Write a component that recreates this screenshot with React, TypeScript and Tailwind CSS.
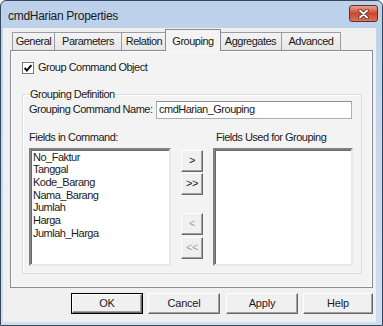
import React from 'react';

const fields = ['No_Faktur', 'Tanggal', 'Kode_Barang', 'Nama_Barang', 'Jumlah', 'Harga', 'Jumlah_Harga'];

const tabs = [
    { label: 'General', w: 'w-[43px]' },
    { label: 'Parameters', w: 'w-[68px]' },
    { label: 'Relation', w: 'w-[46px]' },
    { label: 'Grouping', w: 'w-[56px]', active: true },
    { label: 'Aggregates', w: 'w-[63px]' },
    { label: 'Advanced', w: 'w-[60px]' },
];

// classic raised 3D button
function Btn({ children, className = '', disabled = false }: { children: React.ReactNode; className?: string; disabled?: boolean }) {
    return (
        <div
            className={`flex items-center justify-center bg-[#f0f0f0] border border-t-white border-l-white border-r-[#696969] border-b-[#696969] shadow-[inset_-1px_-1px_0_#a0a0a0] ${disabled ? 'text-[#a0a0a0]' : 'text-[#1a1a1a]'} ${className}`}
        >
            {children}
        </div>
    );
}

function ListBox({ className = '', children }: { className?: string; children?: React.ReactNode }) {
    return (
        <div className={`bg-white border-2 border-t-[#808080] border-l-[#808080] border-r-[#e8e8e8] border-b-[#e8e8e8] shadow-[inset_1px_1px_0_#696969] ${className}`}>
            {children}
        </div>
    );
}

export default function App() {
    return (
        <div className="w-[383px] h-[326px] flex flex-col bg-gradient-to-b from-[#bcd1ea] to-[#cfdff1] border border-[#34475c] rounded-t-[6px] overflow-hidden font-['Liberation_Sans',Arial,sans-serif] text-[#1a1a1a]">
            {/* Title bar */}
            <div className="h-[27px] flex items-start justify-between pl-[7px] pr-[4px] shrink-0">
                <span className="text-[12px] tracking-[-0.3px] mt-[6px] text-[#1b1b1b]">cmdHarian Properties</span>
                <div className="mt-[4px] w-[29px] h-[17px] rounded-[3px] border border-[#6b2a22] bg-gradient-to-b from-[#e8a293] via-[#c9462c] to-[#d8735b] flex items-center justify-center">
                    <svg width="11" height="10" viewBox="0 0 11 10">
                        <path d="M2 1.5 L9 8.5 M9 1.5 L2 8.5" stroke="#3a1810" strokeWidth="3.2" strokeLinecap="round" />
                        <path d="M2 1.5 L9 8.5 M9 1.5 L2 8.5" stroke="#fff" strokeWidth="2" strokeLinecap="round" />
                    </svg>
                </div>
            </div>

            {/* Client area */}
            <div className="flex-1 ml-[2px] mr-[6px] mb-[3px] bg-[#f0f0f0] flex flex-col text-[11px] tracking-[-0.5px]">
                {/* Tabs */}
                <div className="flex items-end h-[22px] pl-[9px] shrink-0">
                    {tabs.map((t, i) =>
                        t.active ? (
                            <div
                                key={t.label}
                                className={`${t.w} h-[22px] -ml-[2px] -mr-[1px] relative z-10 bg-[#f3f3f3] border border-[#898c95] border-b-0 flex items-start justify-center pt-[3px] -mb-px pb-px`}
                            >
                                {t.label}
                            </div>
                        ) : (
                            <div
                                key={t.label}
                                className={`${t.w} h-[18px] ${i > 0 ? '-ml-px' : ''} bg-gradient-to-b from-[#f4f4f4] to-[#e6e6e6] border border-[#9a9ca3] border-b-0 flex items-center justify-center`}
                            >
                                {t.label}
                            </div>
                        )
                    )}
                </div>

                {/* Tab panel */}
                <div className="ml-[7px] w-[363px] h-[238px] bg-[#f3f3f3] border border-[#898c95] shadow-[inset_0_0_0_1px_#fafafa] shrink-0 pl-[11px] pt-[10px]">
                    <div className="flex items-center h-[13px]">
                        <svg width="12" height="12" viewBox="0 0 12 12">
                            <rect x="0.5" y="0.5" width="11" height="11" fill="#fff" stroke="#7a7a7a" />
                            <path d="M2.6 6 L4.9 8.4 L9.4 3.2" fill="none" stroke="#111" strokeWidth="2" />
                        </svg>
                        <span className="ml-[4px]">Group Command Object</span>
                    </div>

                    <fieldset className="mt-[12px] w-[340px] h-[188px] border border-[#d5dfe5] shadow-[inset_1px_1px_0_#fff] rounded-[2px] px-[6px] pb-0">
                        <legend className="px-[1px] text-[11px]">Grouping Definition</legend>

                        <div className="flex items-center mt-[-2px]">
                            <span className="w-[127px]">Grouping Command Name:</span>
                            <div className="w-[196px] h-[18px] bg-white border border-[#abadb3] border-t-[#8e8f8f] flex items-center pl-[2px]">
                                cmdHarian_Grouping
                            </div>
                        </div>

                        <div className="flex mt-[12px] h-[13px] items-center">
                            <span className="w-[187px]">Fields in Command:</span>
                            <span>Fields Used for Grouping</span>
                        </div>

                        <div className="flex mt-[4px]">
                            <ListBox className="w-[142px] h-[118px] pl-[2px] pt-[1px] leading-[12.7px] text-[11px]">
                                {fields.map(f => (
                                    <div key={f}>{f}</div>
                                ))}
                            </ListBox>

                            <div className="w-[22px] ml-[10px] mr-[10px] flex flex-col pt-[2px]">
                                <Btn className="h-[22px]">&gt;</Btn>
                                <Btn className="h-[22px] mt-[1px]">&gt;&gt;</Btn>
                                <Btn className="h-[22px] mt-[18px]" disabled>&lt;</Btn>
                                <Btn className="h-[22px] mt-[2px]" disabled>&lt;&lt;</Btn>
                            </div>

                            <ListBox className="w-[140px] h-[118px]" />
                        </div>
                    </fieldset>
                </div>

                {/* Footer buttons */}
                <div className="flex justify-end mt-[5px] pr-[3px] text-[11px] tracking-[-0.2px]">
                    <div className="w-[72px] h-[21px] border border-black flex">
                        <Btn className="flex-1">OK</Btn>
                    </div>
                    <Btn className="w-[72px] h-[21px] ml-[5px]">Cancel</Btn>
                    <Btn className="w-[72px] h-[21px] ml-[6px]">Apply</Btn>
                    <Btn className="w-[70px] h-[21px] ml-[5px]">Help</Btn>
                </div>
            </div>
        </div>
    );
}
